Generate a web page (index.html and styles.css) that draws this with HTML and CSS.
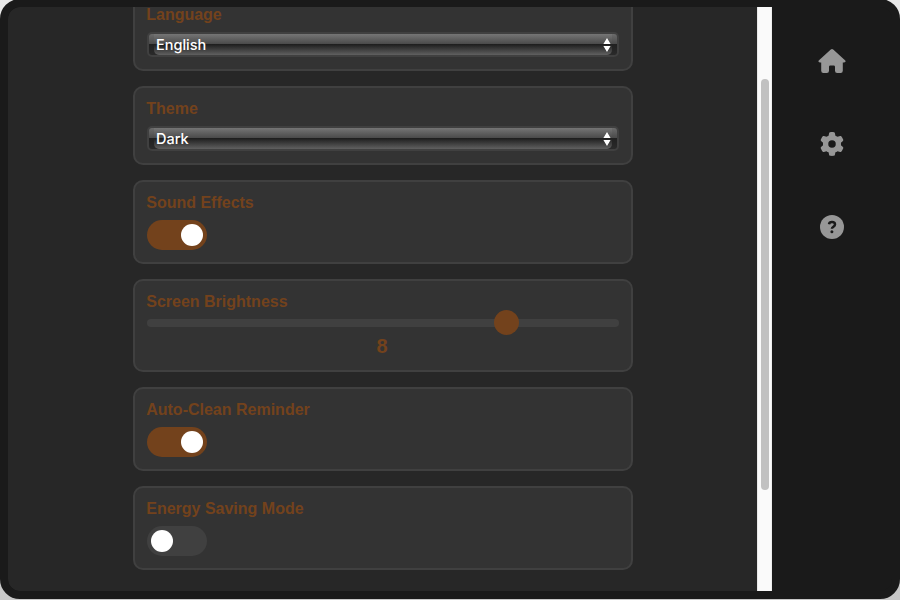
FILE: index.html
```
<!DOCTYPE html>
<html lang="en">
<head>
<meta charset="utf-8">
<title>Settings</title>
<link rel="stylesheet" href="styles.css">
</head>
<body>
<div class="device">
  <main class="screen">
    <div class="settings">
      <section class="card card-select">
        <h2>Language</h2>
        <div class="select"><span>English</span><svg width="8" height="14" viewBox="0 0 8 14"><path d="M4 0 7.600 6H.4zM4 14 .4 8h7.200z"/></svg></div>
      </section>
      <section class="card card-select">
        <h2>Theme</h2>
        <div class="select"><span>Dark</span><svg width="8" height="14" viewBox="0 0 8 14"><path d="M4 0 7.600 6H.4zM4 14 .4 8h7.200z"/></svg></div>
      </section>
      <section class="card card-toggle">
        <h2>Sound Effects</h2>
        <div class="toggle on"><i></i></div>
      </section>
      <section class="card card-range">
        <h2>Screen Brightness</h2>
        <div class="range"><i class="thumb"></i></div>
        <div class="value">8</div>
      </section>
      <section class="card card-toggle">
        <h2>Auto-Clean Reminder</h2>
        <div class="toggle on"><i></i></div>
      </section>
      <section class="card card-toggle">
        <h2>Energy Saving Mode</h2>
        <div class="toggle"><i></i></div>
      </section>
    </div>
  </main>
  <div class="scrollbar"><i></i></div>
  <nav class="sidebar">
    <svg class="home" width="28" height="24" viewBox="0 0 28 24"><path d="M12.800.5Q14 -.5 15.200.5L27 11.200Q28 12.200 27.200 13Q26.900 13.400 26 13.400H24.800V21.800Q24.800 24 22.600 24H19.200Q17 24 17 21.800V17.800Q17 16.400 15.600 16.400H12.400Q11 16.400 11 17.800V21.800Q11 24 8.800 24H5.400Q3.200 24 3.200 21.800V13.400H2Q1.100 13.400.8 13Q0 12.200 1 11.200Z"/></svg>
    <svg width="24" height="24" viewBox="0 0 512 512"><path d="M495.900 166.600c3.200 8.700.5 18.400-6.400 24.600l-43.300 39.400c1.100 8.300 1.700 16.800 1.700 25.400s-.6 17.100-1.700 25.400l43.300 39.400c6.900 6.200 9.600 15.900 6.400 24.600-4.400 11.900-9.700 23.300-15.800 34.300l-4.700 8.100c-6.600 11-14 21.400-22.100 31.200-5.900 7.200-15.700 9.600-24.500 6.800l-55.700-17.700c-13.400 10.300-28.200 18.900-44 25.400l-12.500 57.100c-2 9.100-9 16.300-18.200 17.800-13.800 2.300-28 3.500-42.500 3.500s-28.700-1.200-42.500-3.500c-9.200-1.500-16.200-8.700-18.200-17.800l-12.500-57.100c-15.800-6.500-30.600-15.100-44-25.400l-55.600 17.800c-8.800 2.800-18.600.3-24.500-6.800-8.100-9.800-15.500-20.200-22.100-31.200l-4.700-8.100c-6.100-11-11.400-22.400-15.800-34.300-3.200-8.700-.5-18.400 6.400-24.600l43.300-39.400C64.600 273.100 64 264.600 64 256s.6-17.100 1.700-25.400l-43.300-39.400c-6.900-6.200-9.600-15.900-6.400-24.600 4.400-11.900 9.700-23.300 15.800-34.300l4.700-8.100c6.600-11 14-21.400 22.100-31.200 5.900-7.200 15.700-9.600 24.500-6.800l55.700 17.700c13.400-10.300 28.200-18.900 44-25.400l12.500-57.100c2-9.100 9-16.300 18.200-17.800C227.300 1.200 241.500 0 256 0s28.700 1.200 42.500 3.500c9.200 1.500 16.200 8.700 18.200 17.800l12.500 57.100c15.800 6.500 30.600 15.100 44 25.400l55.700-17.700c8.800-2.800 18.600-.3 24.500 6.800 8.100 9.800 15.500 20.200 22.100 31.200l4.700 8.100c6.100 11 11.400 22.400 15.800 34.300zM256 336a80 80 0 1 0 0-160 80 80 0 1 0 0 160z"/></svg>
    <svg width="24" height="24" viewBox="0 0 24 24"><circle cx="12" cy="12" r="12"/><path class="mark" d="M9 9.200C9.300 7.400 10 7.100 12 7.100c2 0 3 .9 3 2.400 0 2.200-3.100 2.200-3.100 4.300"/><circle class="dot" cx="11.900" cy="16.700" r="1.500"/></svg>
  </nav>
</div>
</body>
</html>
```
FILE: styles.css
```
* { box-sizing: border-box; }

body {
  margin: 0;
  height: 600px;
  overflow: hidden;
  background: linear-gradient(#e8e8e8, #c8c8c8);
  font-family: "Liberation Sans", Arial, sans-serif;
}

.device {
  display: flex;
  width: 900px;
  height: 600px;
  margin-top: -1px;
  border: 8px solid #1a1a1a;
  border-radius: 20px;
  overflow: hidden;
  background: #1a1a1a;
}

.screen {
  width: 749px;
  height: 584px;
  overflow: hidden;
  background: #272727;
  border-radius: 12px 0 0 12px;
}

.settings {
  display: flex;
  flex-direction: column;
  gap: 15px;
  width: 500px;
  margin: -15px auto 0 125px;
}

.card {
  flex: none;
  padding: 12px;
  border: 2px solid #404040;
  border-radius: 10px;
  background: #333;
}

.card-select { height: 79px; }
.card-toggle { height: 84px; }
.card-range { height: 93px; }

h2 {
  margin: -1px 0 8px -0.8px;
  font-size: 16px;
  line-height: 19px;
  font-weight: 700;
  color: #73421c;
}

.select {
  display: flex;
  align-items: center;
  justify-content: space-between;
  position: relative;
  z-index: 0;
  height: 25px;
  padding: 0 6px 0 7px;
  border: 2px solid #404040;
  border-radius: 5px;
  background: linear-gradient(#6b6b6b, #4a4a4a 10px, #202020 10px, #2a2a2a);
  color: #fff;
  font: 500 14.500px/21px Inter, sans-serif;
}

/* Glossy face, inset from the darker ends of the control */
.select::before {
  content: "";
  position: absolute;
  z-index: -1;
  inset: 0 5px;
  border-radius: 0 0 5px 5px;
  background: linear-gradient(#757575, #4a4a4a 10px, #1c1c1c 10px, #606060);
}

.select svg { fill: #fff; }

.toggle {
  display: flex;
  align-items: center;
  width: 60px;
  height: 30px;
  padding: 4px;
  border-radius: 15px;
  background: #404040;
}

.toggle i {
  width: 22px;
  height: 22px;
  border-radius: 50%;
  background: #fff;
}

.toggle.on {
  justify-content: flex-end;
  background: #73421c;
}

.range {
  display: flex;
  align-items: center;
  height: 8px;
  border-radius: 4px;
  background: #404040;
}

.thumb {
  width: 25px;
  height: 25px;
  margin: 0 0 1px 347px;
  border-radius: 50%;
  background: #73421c;
  flex: none;
}

.value {
  margin-top: 7px;
  padding-right: 2px;
  text-align: center;
  color: #73421c;
  font: 700 20px/24px "Liberation Sans", sans-serif;
}

.scrollbar {
  width: 15px;
  padding: 72px 3px 0 4px;
  background: #fafafa;
  border-left: 1px solid #e8e8e8;
  border-right: 1px solid #ededed;
}

.scrollbar i {
  display: block;
  width: 8px;
  height: 411px;
  margin-left: -1px;
  border-radius: 4px;
  background: #c1c1c1;
}

.sidebar {
  display: flex;
  flex: 1;
  flex-direction: column;
  align-items: center;
  gap: 59px;
  padding-top: 42px;
}

.sidebar svg { fill: #979797; flex: none; }
.sidebar .mark { fill: none; stroke: #1a1a1a; stroke-width: 2.500; stroke-linecap: butt; }
.sidebar .dot { fill: #1a1a1a; }
```
